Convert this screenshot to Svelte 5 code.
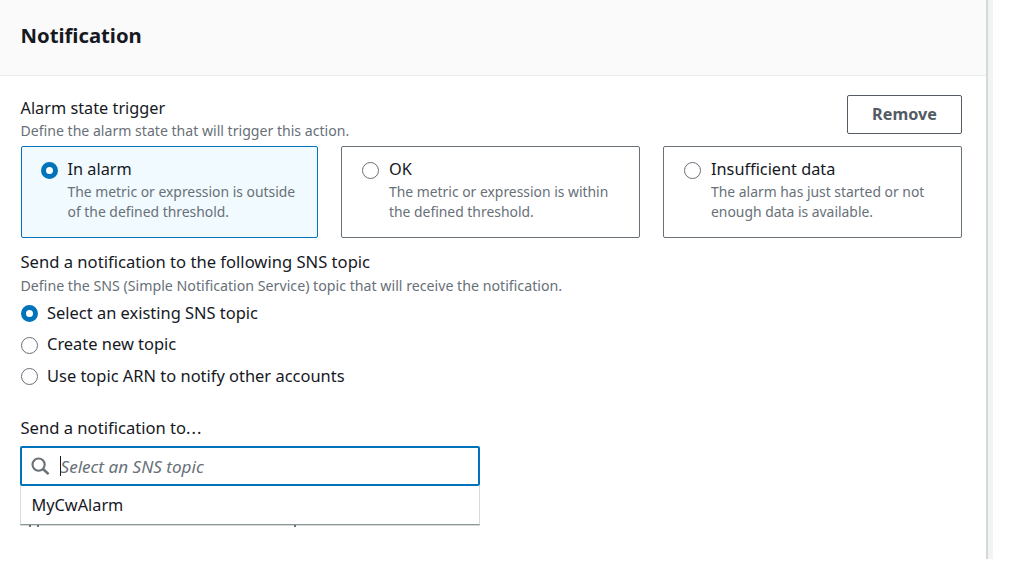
<script>
  const states = [
    { id: 'alarm', title: 'In alarm', lines: ['The metric or expression is outside', 'of the defined threshold.'] },
    { id: 'ok', title: 'OK', lines: ['The metric or expression is within', 'the defined threshold.'] },
    { id: 'insufficient', title: 'Insufficient data', lines: ['The alarm has just started or not', 'enough data is available.'] }
  ];
  const topics = [
    { id: 'existing', label: 'Select an existing SNS topic' },
    { id: 'new', label: 'Create new topic' },
    { id: 'arn', label: 'Use topic ARN to notify other accounts' }
  ];
  let trigger = $state('alarm');
  let mode = $state('existing');
</script>

<div class="page">
  <main class="panel">
    <header><h2>Notification</h2></header>
    <div class="body">
      <div class="top">
        <div>
          <div class="label">Alarm state trigger</div>
          <div class="hint">Define the alarm state that will trigger this action.</div>
        </div>
        <button class="remove">Remove</button>
      </div>

      <div class="cards">
        {#each states as s}
          <label class="card" class:selected={trigger === s.id}>
            <input type="radio" name="trigger" value={s.id} bind:group={trigger} />
            <span class="text">
              <span class="title">{s.title}</span>
              {#each s.lines as line}<span class="desc">{line}</span>{/each}
            </span>
          </label>
        {/each}
      </div>

      <div class="label send">Send a notification to the following SNS topic</div>
      <div class="hint long">Define the SNS (Simple Notification Service) topic that will receive the notification.</div>

      <div class="options">
        {#each topics as t}
          <label class="option">
            <input type="radio" name="mode" value={t.id} bind:group={mode} />
            <span>{t.label}</span>
          </label>
        {/each}
      </div>

      <div class="label to">Send a notification to<span class="dots">...</span></div>
      <div class="select">
        <div class="search">
          <svg width="19" height="19" viewBox="0 0 19 19" fill="none" stroke="#687078" stroke-width="2.1">
            <circle cx="7.6" cy="7.6" r="6.1" />
            <path d="M12 12l5.6 5.2" stroke-width="2.5" />
          </svg>
          <span class="caret"></span>
          <span class="placeholder">Select an SNS topic</span>
        </div>
        <div class="menu">MyCwAlarm</div>
        <i class="tail a"></i><i class="tail b"></i><i class="tail c"></i>
      </div>
    </div>
  </main>
  <div class="gutter"></div>
</div>

<style>
  :global(body) { background: #fff; overflow: hidden; }
  .page {
    display: flex;
    width: 1012px;
    height: 559px;
    font-family: "Noto Sans", "Open Sans", sans-serif;
    color: #16191f;
    white-space: nowrap;
  }
  .panel { box-sizing: border-box; width: 988px; border-right: 2px solid #d5d9d9; }
  .gutter { width: 5px; background: #f2f3f3; }
  header {
    box-sizing: border-box;
    height: 76px;
    padding: 20px 21px 0;
    background: #fafafa;
    border-bottom: 1px solid #eaeded;
  }
  h2 { margin: 0 0 0 -0.5px; font-size: 20.3px; line-height: 31px; font-weight: 700; }
  .body { padding: 19px 0 0 21px; width: 941px; }
  .top { display: flex; justify-content: space-between; height: 51px; }
  .label { font-size: 16.3px; line-height: 24px; margin-left: -0.5px; }
  .top .label { padding-top: 1px; }
  .hint { font-size: 14.1px; line-height: 22px; color: #687078; margin-left: -0.5px; }
  .remove {
    box-sizing: border-box;
    width: 115px;
    height: 39px;
    padding: 0;
    border: 1px solid #545b64;
    border-radius: 2px;
    background: #fff;
    color: #545b64;
    font: 700 16.2px/37px "Noto Sans", sans-serif;
  }
  .cards { display: grid; grid-template-columns: 297px 299px 299px; gap: 23px; }
  .card {
    box-sizing: border-box;
    display: flex;
    height: 92px;
    padding: 10px 0 0 20px;
    border: 1px solid #687078;
    border-radius: 2px;
  }
  .card.selected { padding-left: 19px; border-color: #0073bb; background: #f1faff; }
  input {
    appearance: none;
    box-sizing: border-box;
    flex: none;
    width: 17px;
    height: 17px;
    margin: 0;
    border: 1px solid #687078;
    border-radius: 50%;
    background: #fff;
  }
  input:checked { border: 5px solid #0073bb; }
  .card input { margin: 5px 10px 0 0; }
  .card.selected .text { margin-left: -0.5px; }
  .text { display: flex; flex-direction: column; }
  .title { font-size: 16.3px; line-height: 24px; margin-bottom: 1px; }
  .desc { font-size: 13.9px; line-height: 20px; color: #687078; }
  .send { margin-top: 12px; font-size: 16.6px; }
  .long { margin-top: 1px; font-size: 14.2px; }
  .options { display: flex; flex-direction: column; margin-top: 4px; }
  .option { display: flex; height: 31.5px; font-size: 16.45px; line-height: 24px; }
  .option:nth-child(2) span { margin-top: -1px; }
  .option input { margin: 4px 9px 0 0; }
  .to { margin-top: 20px; font-size: 16.6px; }
  .dots { letter-spacing: 1px; }
  .select { position: relative; width: 460px; margin: 6px 0 0 -1px; }
  .search {
    box-sizing: border-box;
    display: flex;
    align-items: center;
    height: 40px;
    padding-left: 9px;
    border: 2px solid #0073bb;
    border-radius: 2px;
  }
  .search svg { margin-top: 2px; }
  .caret { width: 1px; height: 20px; margin: 1px 0 0 10px; background: #16191f; }
  .placeholder { margin: 2px 0 0 -0.5px; font-size: 17.1px; font-style: italic; color: #687078; }
  .menu {
    box-sizing: border-box;
    height: 39px;
    padding-left: 10.5px;
    border: 1px solid #d5dbdb;
    border-top: 0;
    border-bottom: 1px solid #8d9696;
    box-shadow: 0 1px 0 #d5dbdb;
    font-size: 16.3px;
    line-height: 38px;
  }
  .tail { position: absolute; top: 79px; width: 2px; height: 2px; background: #687078; }
  .a { left: 9px; }
  .b { left: 17px; }
  .c { left: 274px; }
</style>
